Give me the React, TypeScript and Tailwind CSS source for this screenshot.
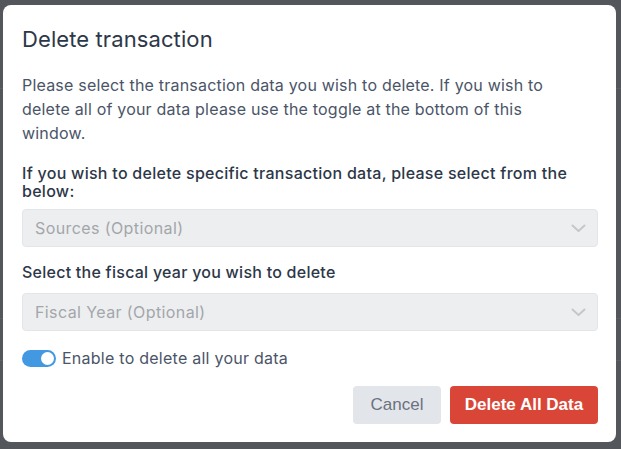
import React, { useState } from "react";

function Chevron() {
  return (
    <svg width="15" height="9" viewBox="0 0 15 9" fill="none">
      <path d="M1.5 1.5L7.5 7L13.5 1.5" stroke="#c4c7cb" strokeWidth="2" strokeLinecap="round" strokeLinejoin="round" />
    </svg>
  );
}

function SelectBox({ placeholder }: { placeholder: string }) {
  return (
    <div className="flex h-[38px] w-full items-center justify-between rounded-[4px] border border-[#e3e5e8] bg-[#edeef0] pl-[12px] pr-[11px]">
      <span className="text-[16px] tracking-[0.4px] text-[#a3a6aa]">{placeholder}</span>
      <Chevron />
    </div>
  );
}

export default function App() {
  const [enabled, setEnabled] = useState(true);

  return (
    <div className="relative h-[449px] w-[621px] overflow-hidden bg-[#53575b] font-['Inter',sans-serif]">
      {/* faint page behind the backdrop */}
      <div className="absolute left-0 right-0 top-[88px] h-px bg-[#5b6065]" />
      <div className="absolute left-0 right-0 top-[318px] h-px bg-[#5b6065]" />
      <div className="absolute left-0 right-0 top-[360px] h-px bg-[#5b6065]" />

      <div className="absolute left-[3px] top-[5px] flex h-[437px] w-[613px] flex-col rounded-[8px] bg-white pl-[19px] pr-[18px] pt-[20px]">
        <h2 className="text-[22px] leading-[28px] tracking-[0.1px] text-[#2d3748]">
          Delete transaction
        </h2>
        <p className="mt-[20px] whitespace-nowrap text-[16px] leading-[24px] tracking-[0.2px] text-[#4a5568]">
          Please select the transaction data you wish to delete. If you wish to
          <br />
          delete all of your data please use the toggle at the bottom of this
          <br />
          window.
        </p>

        <label className="mt-[19px] block whitespace-nowrap text-[16px] font-medium leading-[18px] tracking-[0.28px] text-[#2d3748]">
          If you wish to delete specific transaction data, please select from the
          <br />
          below:
        </label>
        <div className="mt-[9px]">
          <SelectBox placeholder="Sources (Optional)" />
        </div>

        <label className="mt-[17px] block text-[16px] font-medium leading-[17px] tracking-[0.25px] text-[#2d3748]">
          Select the fiscal year you wish to delete
        </label>
        <div className="mt-[12px]">
          <SelectBox placeholder="Fiscal Year (Optional)" />
        </div>

        <div className="mt-[17px] flex items-center gap-[6px]">
          <button
            onClick={() => setEnabled(!enabled)}
            className={`flex h-[17px] w-[34px] items-center rounded-full px-[2px] ${
              enabled ? "justify-end bg-[#4299e1]" : "justify-start bg-[#cbd5e0]"
            }`}
          >
            <span className="h-[13px] w-[13px] rounded-full bg-white" />
          </button>
          <span className="text-[16px] leading-[20px] tracking-[0.25px] text-[#4a5568]">
            Enable to delete all your data
          </span>
        </div>

        <div className="mt-[18px] flex justify-end gap-[9px]">
          <button className="h-[38px] w-[88px] rounded-[4px] bg-[#e2e6ea] font-['Liberation_Sans',sans-serif] text-[17px] text-[#6b7280]">
            Cancel
          </button>
          <button className="h-[38px] w-[148px] rounded-[4px] bg-[#d94637] font-['Liberation_Sans',sans-serif] text-[17px] font-bold text-white">
            Delete All Data
          </button>
        </div>
      </div>
    </div>
  );
}
